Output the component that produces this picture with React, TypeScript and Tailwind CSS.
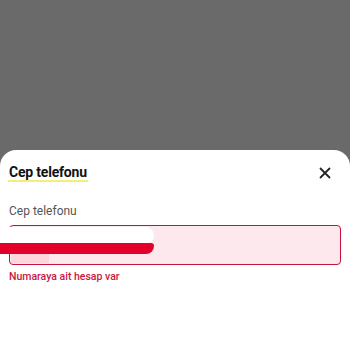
import React from 'react';

// Alt sayfa: cep telefonu girişi (hata durumu)
export default function App() {
  return (
    <div className="w-[350px] h-[350px] bg-[#6a6a6a] flex flex-col overflow-hidden" style={{ fontFamily: 'Roboto, "Noto Sans", sans-serif' }}>
      <div className="h-[150px] shrink-0"></div>

      <div className="flex-1 bg-white rounded-t-[16px] px-[9px]">
        {/* başlık */}
        <div className="flex items-center justify-between pt-[12px]">
          <span className="inline-block text-[14px] leading-[16px] font-bold tracking-[-0.2px] text-[#111] border-b-2 border-[#f5ec7e] px-[1px] -ml-[1px]">
            Cep telefonu
          </span>
          <button className="w-[20px] h-[22px] mr-[6px] flex items-center justify-center text-[#222]">
            <svg width="12" height="12" viewBox="0 0 12 12" fill="none" stroke="currentColor" strokeWidth="1.8" strokeLinecap="round">
              <path d="M1.5 1.5 L10.5 10.5 M10.5 1.5 L1.5 10.5" />
            </svg>
          </button>
        </div>

        {/* alan etiketi */}
        <div className="mt-[20px] text-[12px] leading-[15px] text-[#555]">Cep telefonu</div>

        {/* giriş kutusu */}
        <div className="relative mt-[6px] h-[40px] rounded-[4px] border border-[#c8103c] bg-[#fde9ed]">
          {/* karartılmış numara */}
          <div className="absolute left-[-10px] top-[1px] w-[154px] h-[17px] bg-white rounded-r-[9px]"></div>
          <div className="absolute left-[-10px] top-[17px] w-[154px] h-[11px] bg-[#e3002b] rounded-br-[8px] rounded-tr-[3px]"></div>
          <div className="absolute left-[1px] top-[28px] w-[38px] h-[9px] bg-[#fcd6dc]"></div>
        </div>

        {/* hata mesajı */}
        <div className="mt-[5px] text-[10.5px] leading-[13px] font-medium text-[#c8173f]">Numaraya ait hesap var</div>
      </div>
    </div>
  );
}
